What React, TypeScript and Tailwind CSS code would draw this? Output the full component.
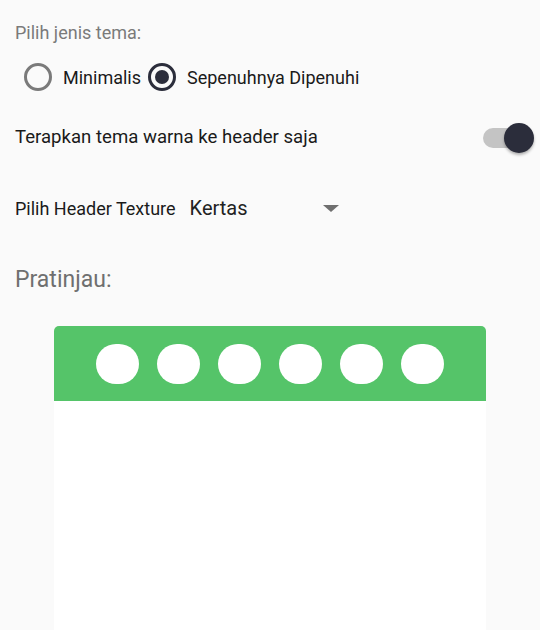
import React from "react";

const font = { fontFamily: "Roboto, 'Noto Sans', sans-serif" };

function Radio({ checked }: { checked: boolean }) {
  return checked ? (
    <div className="w-[28px] h-[28px] rounded-full border-[3px] border-[#2b2d3b] flex items-center justify-center">
      <div className="w-[14px] h-[14px] rounded-full bg-[#2b2d3b]" />
    </div>
  ) : (
    <div className="w-[28px] h-[28px] rounded-full border-[3px] border-[#7a7a7a]" />
  );
}

export default function App() {
  const dots = [0, 1, 2, 3, 4, 5];
  return (
    <div className="w-[540px] h-[630px] bg-[#fafafa] overflow-hidden" style={font}>
      <div className="pt-[20px] pl-[15px]">
        <div className="text-[18px] h-[26px] leading-[26px] text-[#7a7a7a]">Pilih jenis tema:</div>
        <div className="flex items-center mt-[9px] ml-[9px] h-[44px]">
          <Radio checked={false} />
          <span className="ml-[11px] text-[18px] text-[#1a1a1a]">Minimalis</span>
          <div className="ml-[7px]">
            <Radio checked={true} />
          </div>
          <span className="ml-[11px] text-[18px] text-[#1a1a1a]">Sepenuhnya Dipenuhi</span>
        </div>
      </div>
      <div className="flex items-center justify-between pl-[15px] pr-[6px] mt-[15px] h-[48px]">
        <span className="text-[18.6px] text-[#1a1a1a]">Terapkan tema warna ke header saja</span>
        <div className="relative w-[51px] h-[30px] flex items-center">
          <div className="w-[42px] h-[20px] rounded-full bg-[#c4c4c4]" />
          <div className="absolute right-0 top-0 w-[30px] h-[30px] rounded-full bg-[#2b2d3b] shadow-[0_2px_3px_rgba(0,0,0,0.3)]" />
        </div>
      </div>
      <div className="flex items-center pl-[15px] mt-[22px] h-[48px]">
        <span className="text-[18px] text-[#1a1a1a]">Pilih Header Texture</span>
        <span className="ml-[14px] text-[20px] text-[#222]">Kertas</span>
        <div className="ml-[75px] w-0 h-0 border-l-[8px] border-r-[8px] border-t-[7px] border-l-transparent border-r-transparent border-t-[#6f6f6f]" />
      </div>
      <div className="pl-[15px] mt-[32px] text-[23px] h-[32px] leading-[32px] text-[#6f6f6f]">Pratinjau:</div>
      <div className="mx-[54px] mt-[30px] rounded-t-[5px] overflow-hidden">
        <div className="h-[75px] bg-[#55c469] flex items-center justify-center gap-[18px] pt-[1px]">
          {dots.map((d) => (
            <div key={d} className="w-[43px] h-[40px] rounded-full bg-white" />
          ))}
        </div>
        <div className="h-[240px] bg-white" />
      </div>
    </div>
  );
}
